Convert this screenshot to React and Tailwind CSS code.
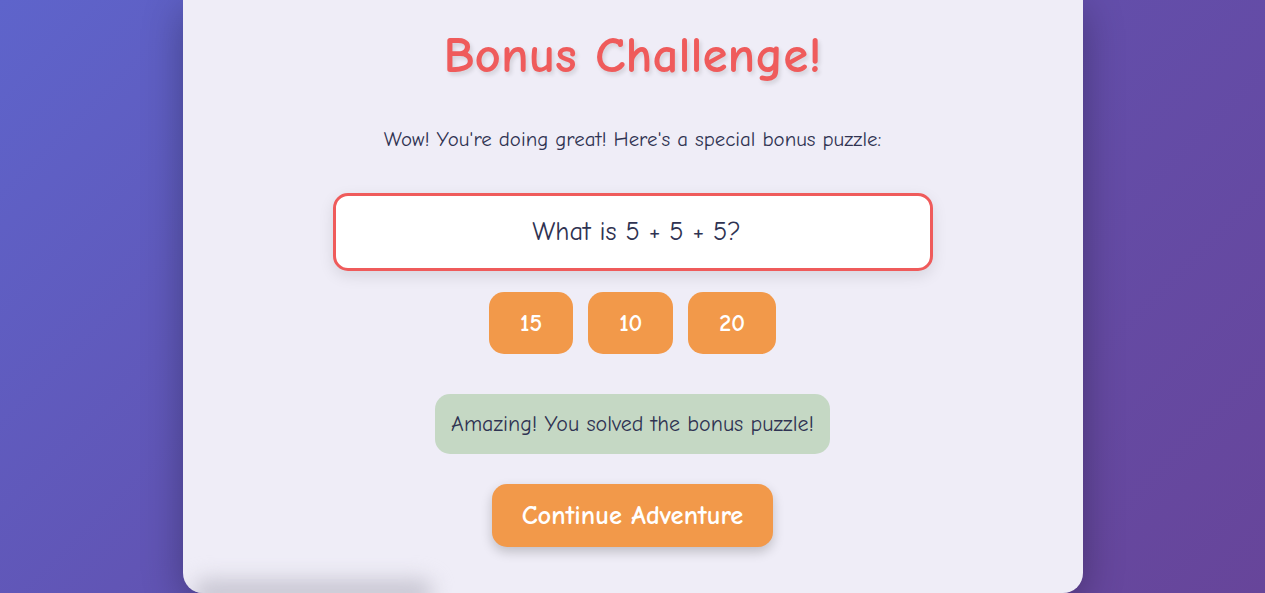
import { useState } from 'react';

const font = { fontFamily: '"Comic Sans MS", "Comic Neue", "Open Sans", sans-serif' };

const App = () => {
  const [picked, setPicked] = useState(15);
  const answers = [15, 10, 20];

  return (
    <div
      className="min-h-[593px] h-[593px] overflow-hidden bg-[linear-gradient(135deg,#5e64cb_0%,#6250ae_50%,#67459a_100%)] text-[#2f3352]"
      style={font}
    >
      <div className="relative mx-auto w-[900px] h-[593px] bg-[#efedf7] rounded-b-[20px] shadow-[0_10px_40px_rgba(0,0,0,0.3)] flex flex-col items-center pt-[27px] overflow-hidden">
        <h1 className="text-[51px] leading-[57px] font-bold text-[#ef5b5b] [text-shadow:2px_3px_4px_rgba(0,0,0,0.12)]">
          Bonus Challenge!
        </h1>
        <p className="mt-[42px] text-[20.9px] leading-[27px]">
          Wow! You're doing great! Here's a special bonus puzzle:
        </p>
        <div className="mt-[40px] w-[600px] h-[78px] bg-white border-[3px] border-[#ef5b5b] rounded-[15px] shadow-[0_5px_15px_rgba(0,0,0,0.1)] flex items-center justify-center pl-[8px] text-[26.5px]">
          What is 5 + 5 + 5?
        </div>
        <div className="mt-[21px] flex gap-[15px]">
          {answers.map((a) => (
            <button
              key={a}
              onClick={() => setPicked(a)}
              className="h-[62px] px-[31px] bg-[#f2994a] rounded-[15px] text-white text-[24px] font-bold"
            >
              {a}
            </button>
          ))}
        </div>
        {picked === 15 && (
          <div className="mt-[40px] h-[60px] px-[16px] bg-[#c5d8c4] rounded-[15px] flex items-center text-[22px]">
            Amazing! You solved the bonus puzzle!
          </div>
        )}
        <button className="mt-[30px] h-[63px] px-[30px] bg-[#f2994a] rounded-[15px] text-white text-[26.5px] font-bold shadow-[0_5px_12px_rgba(0,0,0,0.2)]">
          Continue Adventure
        </button>
        <div className="absolute left-[10px] bottom-[-14px] w-[240px] h-[28px] rounded-full bg-[#c9c7d3] blur-[10px]"></div>
      </div>
    </div>
  );
};

export default App;
